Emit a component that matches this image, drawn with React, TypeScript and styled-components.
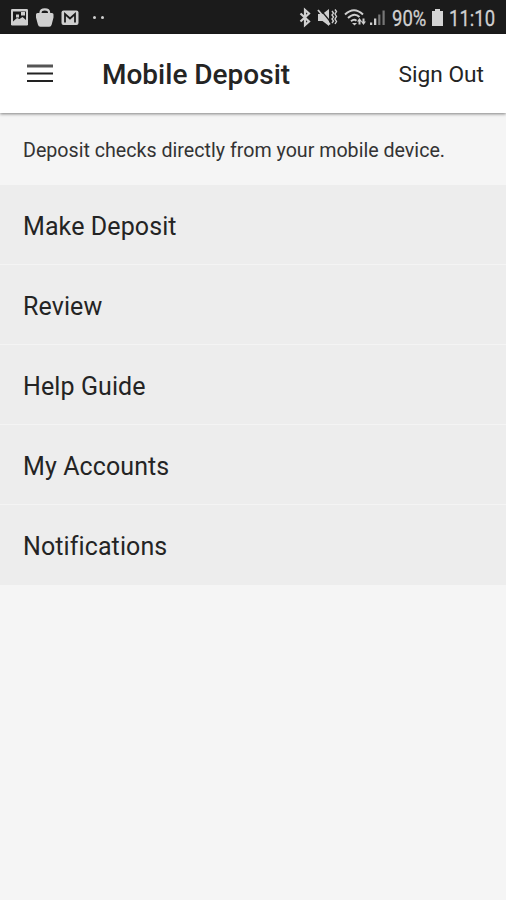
import React from "react";
import styled, { createGlobalStyle } from "styled-components";

const GlobalStyle = createGlobalStyle`
  * { box-sizing: border-box; }
  body { margin: 0; background: #f5f5f5; font-family: Roboto, "Liberation Sans", sans-serif; color: #242424; }
`;

const Screen = styled.div`
  display: flex;
  flex-direction: column;
  width: 506px;
  height: 900px;
  overflow: hidden;
  background: #f5f5f5;
`;

const StatusBar = styled.div`
  display: flex;
  justify-content: space-between;
  flex: none;
  height: 34px;
  background: #1b1b1b;
  color: #d0d0d0;
`;

const StatusIcons = styled.svg`
  display: block;
  flex: none;
  height: 34px;
`;

const StatusGroup = styled.div`
  display: flex;
  align-items: flex-start;
`;

const StatusText = styled.span<{ $width: number; $scale: number }>`
  width: ${(p) => p.$width}px;
  font-size: 22px;
  line-height: 37px;
  white-space: nowrap;
  transform: scaleX(${(p) => p.$scale});
  transform-origin: left center;
  -webkit-text-stroke: 0.3px currentColor;
`;

const AppBar = styled.header`
  display: flex;
  align-items: center;
  flex: none;
  height: 79px;
  padding: 0 22px 0 26px;
  background: #fff;
  box-shadow: 0 1px 3px rgba(0, 0, 0, 0.48);
  z-index: 1;
`;

const MenuButton = styled.button`
  display: block;
  width: 28px;
  height: 20px;
  margin: 0 48px 0 0;
  padding: 0;
  border: 0;
  background: none;
`;

const Title = styled.h1`
  flex: 1;
  margin: 0;
  padding-top: 3px;
  font-size: 28px;
  font-weight: 500;
  line-height: 32px;
`;

const SignOut = styled.a`
  padding-top: 3px;
  font-size: 22.7px;
  line-height: 28px;
`;

const Intro = styled.p`
  flex: none;
  height: 72px;
  margin: 0;
  padding-left: 23px;
  font-size: 19.65px;
  line-height: 76px;
  color: #333;
`;

const Menu = styled.nav`
  display: flex;
  flex-direction: column;
`;

const MenuItem = styled.a`
  height: 80px;
  padding-left: 23px;
  border-bottom: 1px solid #f4f4f4;
  background: #ededed;
  font-size: 25px;
  line-height: 83px;
  letter-spacing: 0.1px;

  &:last-child {
    border-bottom-color: #ededed;
  }
`;

const items = ["Make Deposit", "Review", "Help Guide", "My Accounts", "Notifications"];

export default function App() {
  return (
    <>
      <GlobalStyle />
      <Screen>
        <StatusBar>
          <StatusIcons width="112" viewBox="0 0 112 34" fill="#cfcfcf">
            <rect x="11" y="9" width="17" height="16.5" rx="1.2" />
            <path d="M13 11.500h13v8.500l-3.500-3-3 2-2.500-1-4 3.500z" fill="#1b1b1b" />
            <path d="M16 14.500h3v3h-3zM21 12h4v3.500h-4z" />
            <path d="M36 14.500q0-1.500 1.500-1.500h14.500q1.500 0 1.500 1.500v3l-1.800 7q-.5 2.200-2.500 2.200h-8.800q-2 0-2.500-2.200l-1.900-7z" />
            <path d="M40.500 14v-1.500q0-3.200 4.300-3.200t4.300 3.200v1.500" fill="none" stroke="#cfcfcf" strokeWidth="2.200" />
            <rect x="61.500" y="10.500" width="17" height="14.500" rx="2" />
            <path d="M65 22.500v-8.500l5 4.500 5-4.500v8.500" fill="none" stroke="#1b1b1b" strokeWidth="1.800" />
            <circle cx="94.500" cy="17.500" r="1.500" />
            <circle cx="102.500" cy="17.500" r="1.500" />
          </StatusIcons>
          <StatusGroup>
            <StatusIcons width="94" viewBox="298 0 94 34" fill="#cfcfcf">
              <path d="M300.500 13.500l8.500 8-4 3.500v-15l4 3.500-8.500 8" fill="none" stroke="#cfcfcf" strokeWidth="2.200" />
              <path d="M318 14h4.500l6.500-5v17l-6.500-5h-4.500z" />
              <path d="M319.500 8.500l11.500 14" stroke="#1b1b1b" strokeWidth="1.200" />
              <path d="M318 10l12 14.500" stroke="#cfcfcf" strokeWidth="1.800" />
              <path d="M332 11l1.500 2-1.500 2 1.500 2-1.500 2 1.500 2-1.500 2M335 9.500l1.500 2-1.500 2.500 1.500 2.500-1.500 2.500 1.500 2.500-1.500 2.500" fill="none" stroke="#cfcfcf" strokeWidth="1.400" />
              <g fill="none" stroke="#cfcfcf" strokeWidth="2">
                <path d="M345 14.500q9-8.500 18 0M348 18q6.500-6 11.500-1M351 21.200q3-2.600 5.500-.5" />
              </g>
              <path d="M352 23h5l-2.500 2.500z" />
              <path d="M357 21.500l2.500-3.500 2.500 3.500h-1.500v3h-2v-3zM361 21.500h1.500v-3h2v3h1.500l-2.500 3.500z" />
              <path d="M370 22.500h2.200v2.500h-2.200zM374 18.500h2.300v6.500h-2.300z" />
              <path d="M378.200 14.500h2.200v10.500h-2.200zM382.500 10.500h2.200v14.500h-2.200z" fill="#777" />
            </StatusIcons>
            <StatusText $width={39} $scale={0.84}>90%</StatusText>
            <StatusIcons width="18" viewBox="431 0 18 34" fill="#d4d4d4">
              <path d="M432 11h3v-2h5v2h3v15h-11z" />
            </StatusIcons>
            <StatusText $width={57} $scale={0.84}>11:10</StatusText>
          </StatusGroup>
        </StatusBar>
        <AppBar>
          <MenuButton aria-label="Menu">
            <svg width="28" height="20" viewBox="0 0 28 20">
              <path d="M1 .5h26v3h-26z" fill="#555" />
              <path d="M1 8.500h26v2h-26zM1 16h26v2h-26z" fill="#222" />
            </svg>
          </MenuButton>
          <Title>Mobile Deposit</Title>
          <SignOut>Sign Out</SignOut>
        </AppBar>
        <Intro>Deposit checks directly from your mobile device.</Intro>
        <Menu>
          {items.map((label) => (
            <MenuItem key={label}>{label}</MenuItem>
          ))}
        </Menu>
      </Screen>
    </>
  );
}
